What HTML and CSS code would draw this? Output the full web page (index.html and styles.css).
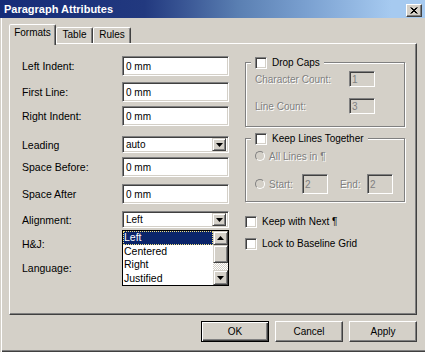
FILE: index.html
```html
<!DOCTYPE html>
<html lang="en">
<head>
  <meta charset="UTF-8" />
  <title>Paragraph Attributes</title>
  <link rel="stylesheet" href="styles.css">
</head>
<body>
  <div class="window">
    <div class="titlebar">
      <span class="title">Paragraph Attributes</span>
      <span class="close">
        <svg width="8" height="7" viewBox="0 0 8 7"><path d="M0.5 0.5L6.5 6.5M1.5 0.5L7.5 6.5M6.5 0.5L0.5 6.5M7.5 0.5L1.5 6.5" stroke="#000" stroke-width="1"/></svg>
      </span>
    </div>

    <div class="tabs">
      <div class="tab active tab-formats">Formats</div>
      <div class="tab tab-table">Table</div>
      <div class="tab tab-rules">Rules</div>
    </div>

    <div class="panel">
      <div class="left">
        <div class="row"><label>Left Indent:</label><div class="field">0 mm</div></div>
        <div class="row gap6"><label>First Line:</label><div class="field">0 mm</div></div>
        <div class="row gap4"><label>Right Indent:</label><div class="field">0 mm</div></div>
        <div class="row gap10"><label>Leading</label>
          <div class="field select">auto<span class="arrow"><svg width="7" height="4" viewBox="0 0 7 4"><polygon points="0,0 7,0 3.5,4" fill="#000"/></svg></span></div>
        </div>
        <div class="row gap4"><label>Space Before:</label><div class="field">0 mm</div></div>
        <div class="row gap7"><label>Space After</label><div class="field">0 mm</div></div>
        <div class="row gap7"><label>Alignment:</label>
          <div class="field select">Left<span class="arrow"><svg width="7" height="4" viewBox="0 0 7 4"><polygon points="0,0 7,0 3.5,4" fill="#000"/></svg></span></div>
          <div class="list">
            <div class="items">
              <div class="item selected">Left</div>
              <div class="item">Centered</div>
              <div class="item">Right</div>
              <div class="item">Justified</div>
            </div>
            <div class="scrollbar">
              <span class="sb-btn sb-up"><svg width="7" height="4" viewBox="0 0 7 4"><polygon points="0,4 7,4 3.5,0" fill="#000"/></svg></span>
              <span class="sb-thumb"></span>
              <span class="sb-track"></span>
              <span class="sb-btn sb-down"><svg width="7" height="4" viewBox="0 0 7 4"><polygon points="0,0 7,0 3.5,4" fill="#000"/></svg></span>
            </div>
          </div>
        </div>
        <div class="row gap8 short"><label>H&amp;J:</label></div>
        <div class="row gap8 short"><label>Language:</label></div>
      </div>

      <div class="right">
        <div class="group drop-caps">
          <div class="group-title"><span class="check"></span>Drop Caps</div>
          <div class="grow"><span class="dis count-label">Character Count:</span><div class="field small">1</div></div>
          <div class="grow second"><span class="dis count-label">Line Count:</span><div class="field small">3</div></div>
        </div>

        <div class="group keep-lines">
          <div class="group-title"><span class="check"></span>Keep Lines Together</div>
          <div class="grow radio-row"><span class="radio"></span><span class="dis">All Lines in ¶</span></div>
          <div class="grow start-row">
            <span class="radio"></span><span class="dis start-label">Start:</span>
            <div class="field small tall">2</div>
            <span class="dis end-label">End:</span>
            <div class="field small tall">2</div>
          </div>
        </div>

        <div class="opt first"><span class="check"></span>Keep with Next ¶</div>
        <div class="opt"><span class="check"></span>Lock to Baseline Grid</div>
      </div>
    </div>

    <div class="buttons">
      <button class="btn default">OK</button>
      <button class="btn">Cancel</button>
      <button class="btn">Apply</button>
    </div>
  </div>
</body>
</html>
```

FILE: styles.css
```css
* {
  box-sizing: border-box;
}
body {
  margin: 0;
  font-family: "Liberation Sans", Arial, sans-serif;
  font-size: 10px;
  color: #000;
  background-color: #d4d0c8;
}
.window {
  width: 425px;
  height: 352px;
  background-color: #d4d0c8;
  overflow: hidden;
  box-shadow: inset 1px 0 #d4d0c8, inset 2px 0 #fff, inset 0 -1px #404040, inset 0 -2px #808080;
}
.titlebar {
  height: 18px;
  display: flex;
  align-items: center;
  justify-content: space-between;
  padding: 0 3px 0 4px;
  background: linear-gradient(90deg, #152c78 0%, #22397f 34%, #3b5896 44%, #5a7fb2 56%, #7aa0d0 72%, #a6caf0 92%);
  color: #fff;
  font-size: 11px;
  font-weight: bold;
}
.close {
  width: 16px;
  height: 13px;
  margin-top: 2px;
  display: flex;
  align-items: center;
  justify-content: center;
  background-color: #d4d0c8;
  border: 1px solid;
  border-color: #fff #404040 #404040 #fff;
  box-shadow: inset -1px -1px #808080;
}

/* tabs */
.tabs {
  display: flex;
  align-items: flex-end;
  height: 19px;
  margin-top: 6px;
  padding-left: 9px;
}
.tab {
  height: 16px;
  line-height: 14px;
  text-align: center;
  border: 1px solid;
  border-bottom: none;
  border-color: #fff #404040 transparent #fff;
  border-radius: 2px 2px 0 0;
  box-shadow: inset -1px 0 #808080;
  background-color: #d4d0c8;
}
.tab.active {
  height: 21px;
  line-height: 16px;
  margin-bottom: -2px;
  position: relative;
  z-index: 1;
}
.tab-formats { width: 47px; }
.tab-table { width: 37px; }
.tab-rules { width: 38px; }

/* panel */
.panel {
  margin-left: 9px;
  width: 408px;
  height: 272px;
  border: 1px solid;
  border-color: #fff #404040 #404040 #fff;
  box-shadow: inset -1px -1px #808080;
  padding: 12px 0 0 12px;
  display: flex;
  align-items: flex-start;
}
.left {
  width: 207px;
}
.row {
  display: flex;
  align-items: center;
  position: relative;
}
.row label {
  width: 100px;
  font-size: 10.5px;
}
.row.short { height: 16px; }
.gap4 { margin-top: 4px; }
.gap6 { margin-top: 6px; }
.gap7 { margin-top: 7px; }
.gap8 { margin-top: 8px; }
.gap10 { margin-top: 10px; }

.field {
  width: 107px;
  height: 20px;
  display: flex;
  align-items: center;
  padding-left: 3px;
  background-color: #fff;
  border: 1px solid;
  border-color: #808080 #fff #fff #808080;
  box-shadow: inset 1px 1px #404040, inset -1px -1px #d4d0c8;
}
.field.select {
  height: 17px;
  justify-content: space-between;
  padding-right: 2px;
}
.arrow {
  width: 14px;
  height: 13px;
  display: flex;
  align-items: center;
  justify-content: center;
  background-color: #d4d0c8;
  border: 1px solid;
  border-color: #d4d0c8 #404040 #404040 #d4d0c8;
  box-shadow: inset 1px 1px #fff, inset -1px -1px #808080;
}

/* open dropdown list */
.list {
  position: absolute;
  top: 19px;
  left: 100px;
  width: 107px;
  height: 56px;
  display: flex;
  background-color: #fff;
  border: 1px solid #000;
  z-index: 2;
}
.items {
  flex: 1;
}
.item {
  height: 13.5px;
  line-height: 13.5px;
  padding-left: 1px;
  font-size: 10.5px;
}
.item.selected {
  background-color: #0a246a;
  color: #fff;
  outline: 1px dotted #f0e080;
  outline-offset: -1px;
}
.scrollbar {
  width: 15px;
  display: flex;
  flex-direction: column;
}
.sb-btn {
  height: 14px;
  display: flex;
  align-items: center;
  justify-content: center;
  background-color: #d4d0c8;
  border: 1px solid;
  border-color: #d4d0c8 #404040 #404040 #d4d0c8;
  box-shadow: inset 1px 1px #fff, inset -1px -1px #808080;
}
.sb-down { height: 15px; }
.sb-thumb {
  height: 18px;
  background-color: #d4d0c8;
  border: 1px solid;
  border-color: #d4d0c8 #404040 #404040 #d4d0c8;
  box-shadow: inset 1px 1px #fff, inset -1px -1px #808080;
}
.sb-track {
  height: 7px;
  background: repeating-conic-gradient(#d4d0c8 0 25%, #fff 0 50%) 0 0 / 2px 2px;
}

/* right column */
.right {
  width: 160px;
  margin-left: 16px;
}
.group {
  position: relative;
  border: 1px solid #808080;
  box-shadow: inset 1px 1px #fff, 1px 1px #fff;
  padding-left: 9px;
}
.group-title {
  position: absolute;
  top: -7px;
  left: 5px;
  height: 13px;
  display: flex;
  align-items: center;
  padding: 0 4px;
  background-color: #d4d0c8;
}
.group-title .check {
  margin-right: 5px;
}
.drop-caps {
  margin-top: 6px;
  padding-top: 8px;
  padding-bottom: 12px;
}
.keep-lines {
  margin-top: 11px;
  padding-top: 10px;
  padding-bottom: 7px;
}
.grow {
  display: flex;
  align-items: center;
}
.grow.second {
  margin-top: 11px;
}
.dis {
  color: #808080;
  text-shadow: 1px 1px #fff;
}
.count-label {
  width: 94px;
}
.field.small {
  width: 26px;
  height: 16px;
  padding-left: 2px;
  background-color: #d4d0c8;
  color: #808080;
}
.field.small.tall {
  height: 20px;
}
.radio-row {
  height: 14px;
}
.start-row {
  margin-top: 11px;
}
.radio {
  width: 10px;
  height: 10px;
  margin-right: 4px;
  border-radius: 50%;
  border: 1px solid;
  border-color: #808080 #fff #fff #808080;
  background-color: #d4d0c8;
}
.start-label {
  width: 33px;
}
.end-label {
  width: 27px;
  margin-left: 12px;
}
.check {
  width: 12px;
  height: 12px;
  flex: none;
  background-color: #fff;
  border: 1px solid;
  border-color: #808080 #fff #fff #808080;
  box-shadow: inset 1px 1px #404040, inset -1px -1px #d4d0c8;
}
.opt {
  display: flex;
  align-items: center;
  height: 13px;
  margin-top: 9px;
}
.opt.first {
  margin-top: 13px;
}
.opt .check {
  margin-right: 5px;
}

/* buttons */
.buttons {
  display: flex;
  justify-content: flex-end;
  gap: 6px;
  margin-top: 6px;
  padding-right: 8px;
}
.btn {
  width: 68px;
  height: 21px;
  padding: 0;
  font-family: "Liberation Sans", Arial, sans-serif;
  font-size: 10px;
  color: #000;
  background-color: #d4d0c8;
  border: 1px solid;
  border-color: #fff #404040 #404040 #fff;
  box-shadow: inset -1px -1px #808080;
}
.btn.default {
  border-color: #000;
  box-shadow: inset 1px 1px #fff, inset -1px -1px #404040, inset -2px -2px #808080;
}
```
